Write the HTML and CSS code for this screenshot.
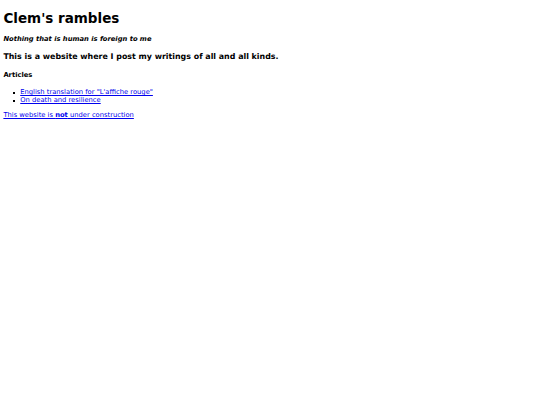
FILE: index.html
```html
<!DOCTYPE html>
<html>
<head>
<meta charset="utf-8">
<title>Clem's rambles</title>
<link rel="stylesheet" href="styles.css">
</head>
<body class="page">
<h1 class="title">Clem's rambles</h1>
<h4 class="tagline"><em>Nothing that is human is foreign to me</em></h4>
<h3 class="intro">This is a website where I post my writings of all and all kinds.</h3>
<h4 class="section">Articles</h4>
<ul class="articles">
<li class="item"><a class="link" href="#">English translation for "L'affiche rouge"</a></li>
<li class="item"><a class="link" href="#">On death and resilience</a></li>
</ul>
<a class="link" href="#">This website is <strong>not</strong> under construction</a>
</body>
</html>
```
FILE: styles.css
```css
html {
  background: #ffffff;
}
.page {
  margin: 1.4px 3.375px 3.375px;
  font-family: "DejaVu Sans", sans-serif;
  font-size: 6.75px;
  color: #000000;
}
.title {
  font-size: 13.5px;
  margin: 9.045px 0;
}
.tagline {
  font-size: 6.75px;
  margin: 8.98px 0;
}
.intro {
  font-size: 7.9px;
  margin: 7.9px 0;
}
.section {
  font-size: 6.75px;
  margin: 9.98px 0 8.98px;
}
.articles {
  margin: 6.75px 0;
  padding-left: 16.875px;
  list-style: none;
}
.item::before {
  content: "";
  display: inline-block;
  width: 2px;
  height: 2px;
  background: #000000;
  margin-left: -7.25px;
  margin-right: 5.25px;
  vertical-align: middle;
}
.link {
  color: #0000ee;
}
```
